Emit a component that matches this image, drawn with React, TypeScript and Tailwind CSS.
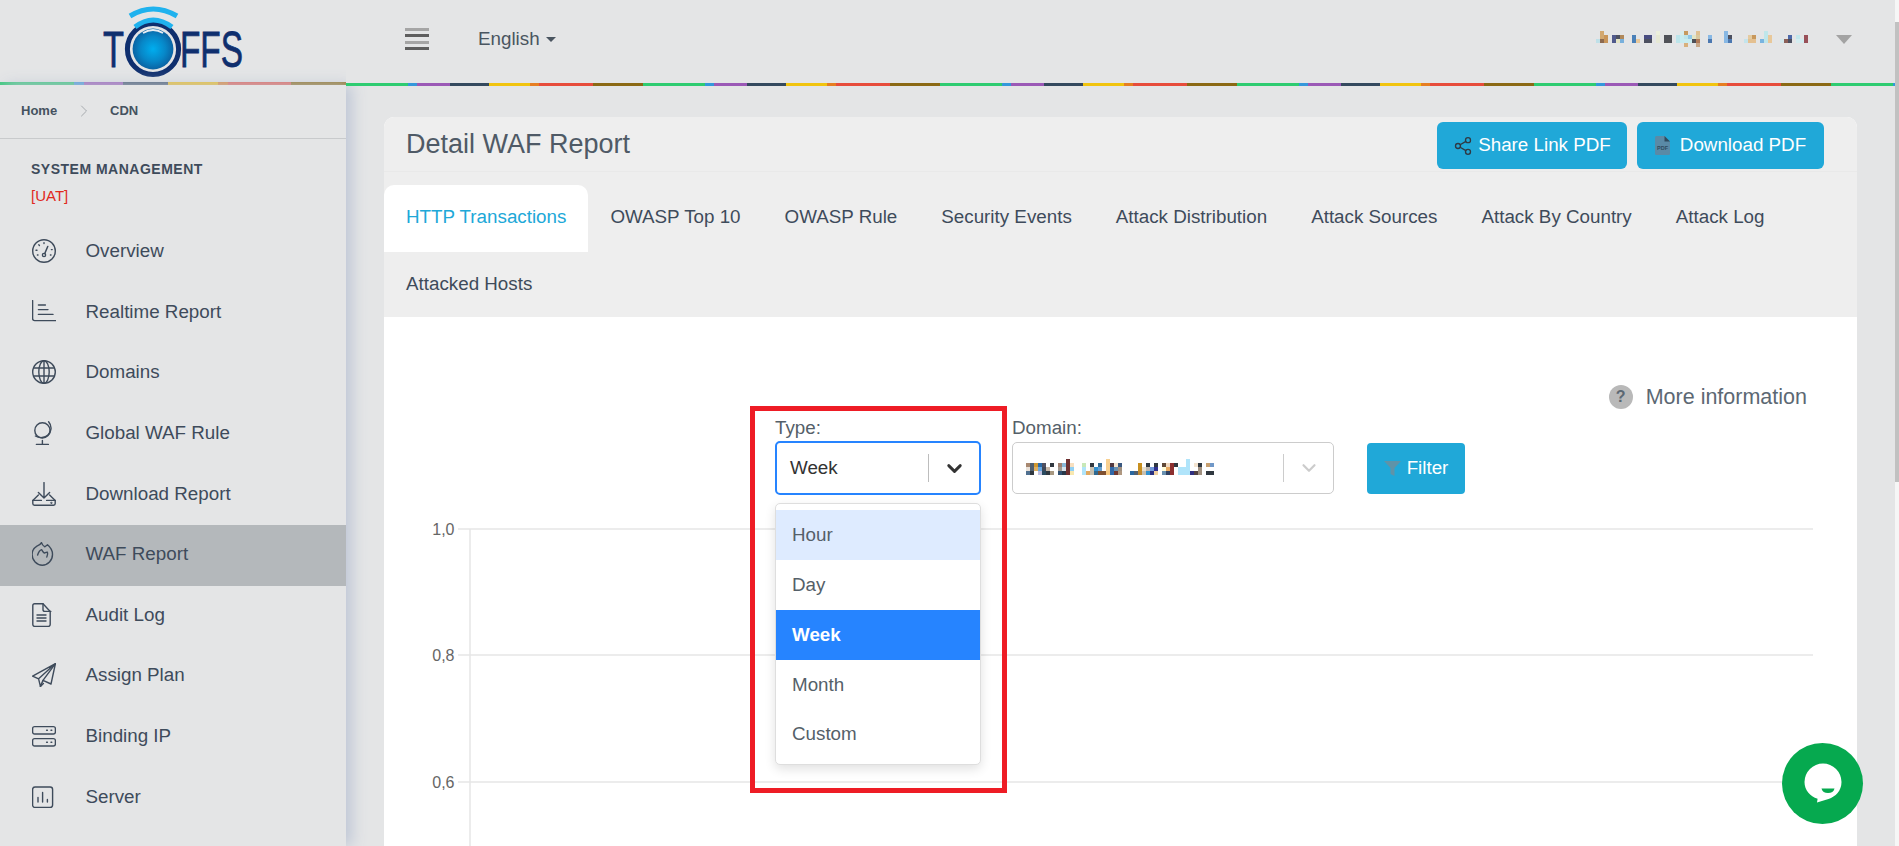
import { ChevronDown, ChevronRight, Share2 } from "lucide-react";
import type { ReactNode } from "react";

function IconBase({ children }: { children: ReactNode }) {
  return (
    <svg width="24" height="24" viewBox="0 0 24 24" fill="none" stroke="#3e4b5b" strokeWidth="1.4" strokeLinecap="round" strokeLinejoin="round">
      {children}
    </svg>
  );
}

const GaugeIcon = () => (
  <IconBase>
    <circle cx="12" cy="12" r="11.3" />
    <circle cx="12" cy="16" r="1.6" />
    <path d="M12.7 14.6 15.8 7.4" />
    <path d="M12 3.6v1M6.8 5.8l.6.6M4 11.2h1M5.4 16h.6M19.4 10.6h.8M18.4 16h.6" />
  </IconBase>
);
const ReportIcon = () => (
  <IconBase>
    <path d="M.6.6v18q0 2 2 2H23.6" />
    <path d="M6.4 5h7M6.4 9.6h9.6M6.4 14.4h14.6" />
  </IconBase>
);
const WorldIcon = () => (
  <IconBase>
    <circle cx="12" cy="12" r="11.3" />
    <ellipse cx="12" cy="12" rx="5.2" ry="11.3" />
    <path d="M12 .7v22.6M1.8 8h20.4M1.8 16h20.4" />
  </IconBase>
);
const StandGlobeIcon = () => (
  <IconBase>
    <circle cx="10.4" cy="9.4" r="7.6" />
    <path d="M16.6 .8c3.8 4.4 2.8 10-.6 13.2-3 2.8-8.4 3.6-12.6 1" />
    <path d="M10.4 19.4v3.6M4.4 23.4h12" />
  </IconBase>
);
const TrayIcon = () => (
  <IconBase>
    <path d="M12 .6v15.4M6.4 10.4l5.6 5.6 5.6-5.6" />
    <path d="M6.4 13 .8 18.4v3.2q0 1.6 1.6 1.6h19.2q1.6 0 1.6-1.6v-3.2L17.6 13" />
    <path d="M.8 18.4h8.6M14.6 18.4h8.6" />
    <circle cx="19.4" cy="20.8" r=".4" />
  </IconBase>
);
const FlameIcon = () => (
  <IconBase>
    <path d="M9.5.6c.6 2.4 2 3.4 3.4 4.2l2.6-2c3.2 2.6 5 5.6 5 9.6a10.2 10.8 0 0 1-20.4 0c0-3.8 1.8-6.4 4.8-8.2 2-.8 3.8-2 4.6-3.6Z" />
    <path d="M5.6 13c1-3 2.6-5 4-5.4 1 1.4 1.6 3 2.8 3.4 1-.2 1.8-1.2 3-.8.6 1.4.2 3-.6 4.8" />
  </IconBase>
);
const DocIcon = () => (
  <IconBase>
    <path d="M11 .8H2.6Q.8.8.8 2.6v19q0 1.8 1.8 1.8h13.8q1.8 0 1.8-1.8V8.4Z" />
    <path d="M11 .8v5.6q0 2 2 2h5.8" />
    <path d="M5 12h9M5 15h9M5 18h9" />
  </IconBase>
);
const PlaneIcon = () => (
  <IconBase>
    <path d="M23.4.6.6 13.2l6 2.6L23.4.6 19 21 11 17.4 8.4 23.4l-1.8-7.6" />
    <path d="M11 17.4 23.4.6M8.4 23.4l3-3" />
  </IconBase>
);
const RackIcon = () => (
  <IconBase>
    <rect x=".6" y="2.6" width="22.8" height="7.4" rx="2" />
    <rect x=".6" y="14.6" width="22.8" height="7.4" rx="2" />
    <path d="M14.6 6.3h.8M19 6.3h.8M14.6 18.3h.8M19 18.3h.8" />
  </IconBase>
);
const BarsIcon = () => (
  <IconBase>
    <rect x=".6" y="2" width="20" height="20.4" rx="2.4" />
    <path d="M6 17v-4.6M10.6 17V7.4M15.4 17v-2.6" />
  </IconBase>
);

const navItems = [
  { label: "Overview", icon: <GaugeIcon /> },
  { label: "Realtime Report", icon: <ReportIcon /> },
  { label: "Domains", icon: <WorldIcon /> },
  { label: "Global WAF Rule", icon: <StandGlobeIcon /> },
  { label: "Download Report", icon: <TrayIcon /> },
  { label: "WAF Report", icon: <FlameIcon />, active: true },
  { label: "Audit Log", icon: <DocIcon /> },
  { label: "Assign Plan", icon: <PlaneIcon /> },
  { label: "Binding IP", icon: <RackIcon /> },
  { label: "Server", icon: <BarsIcon /> },
];

const tabs = [
  "HTTP Transactions",
  "OWASP Top 10",
  "OWASP Rule",
  "Security Events",
  "Attack Distribution",
  "Attack Sources",
  "Attack By Country",
  "Attack Log",
  "Attacked Hosts",
];

const typeOptions = ["Hour", "Day", "Week", "Month", "Custom"];

// blurred-out values in the screenshot, one [col, row, colour] per mosaic cell
type Cell = [number, number, string];

const userCells: Cell[] = [
  [1, 0, "#d2a870"], [15, 0, "#ecefdc"], [21, 0, "#d8ecec"], [22, 0, "#c69a60"], [25, 0, "#e0c090"], [32, 0, "#88b8e4"], [42, 0, "#bfe6ea"],
  [1, 1, "#d2a870"], [2, 1, "#c8955a"], [4, 1, "#505a8c"], [5, 1, "#4c5060"], [6, 1, "#b0885a"], [9, 1, "#4a80b8"], [12, 1, "#484c80"], [13, 1, "#484c80"], [15, 1, "#e6e8d4"], [17, 1, "#4e5058"], [18, 1, "#4e5058"], [20, 1, "#bce4ea"], [21, 1, "#c8ecf0"], [22, 1, "#bde5ea"], [23, 1, "#90c8e8"], [24, 1, "#e4e4c4"], [25, 1, "#d8c8a0"], [28, 1, "#88b8e4"], [32, 1, "#88b8e4"], [33, 1, "#4c5060"], [38, 1, "#e4cba0"], [39, 1, "#c8985c"], [42, 1, "#bfe6ea"], [43, 1, "#e8c89a"], [48, 1, "#4c68a8"], [50, 1, "#c4e8ec"], [52, 1, "#985058"],
  [0, 2, "#bfe0e8"], [1, 2, "#8c6a50"], [2, 2, "#c8955a"], [4, 2, "#505a8c"], [5, 2, "#e4e4c4"], [6, 2, "#78b0dc"], [9, 2, "#4a80b8"], [10, 2, "#e8c89a"], [12, 2, "#4c5060"], [13, 2, "#4c5060"], [15, 2, "#e6e8d4"], [17, 2, "#505258"], [18, 2, "#505258"], [20, 2, "#bce4ea"], [21, 2, "#c8ecf0"], [22, 2, "#c8ecf0"], [23, 2, "#c8ecf0"], [24, 2, "#4e5058"], [25, 2, "#b07a58"], [28, 2, "#4c78b0"], [32, 2, "#88b8e4"], [33, 2, "#4c78b0"], [37, 2, "#c4e4ec"], [38, 2, "#e4c090"], [39, 2, "#e4c090"], [41, 2, "#78b4e0"], [42, 2, "#bfe6ea"], [43, 2, "#e8c89a"], [46, 2, "#d4e8ec"], [47, 2, "#8c6058"], [48, 2, "#4c5060"], [50, 2, "#d4ecf0"], [51, 2, "#d4ecf0"], [52, 2, "#985058"],
  [22, 3, "#d8b07c"], [25, 3, "#c8a888"],
];

const domainCells: Cell[] = [
  [10, 0, "#6e3030"], [20, 0, "#f8d090"], [40, 0, "#b0e4fa"],
  [0, 1, "#a88870"], [1, 1, "#506070"], [2, 1, "#d09830"], [3, 1, "#2a6aa8"], [4, 1, "#505060"], [6, 1, "#303840"], [8, 1, "#a08070"], [9, 1, "#88b8d8"], [10, 1, "#6e3030"], [11, 1, "#f8e0c0"], [14, 1, "#c8e8b8"], [16, 1, "#303840"], [18, 1, "#306890"], [20, 1, "#f8d090"], [21, 1, "#503840"], [22, 1, "#f4e4d0"], [23, 1, "#3a5880"], [28, 1, "#c89020"], [30, 1, "#303840"], [32, 1, "#303840"], [34, 1, "#604838"], [35, 1, "#f0d8c0"], [36, 1, "#8c3030"], [37, 1, "#303840"], [40, 1, "#b0e4fa"], [42, 1, "#f4e4d0"], [43, 1, "#303840"], [45, 1, "#c8a070"], [46, 1, "#7098c8"],
  [0, 2, "#e8e0d8"], [1, 2, "#506070"], [2, 2, "#e0b060"], [3, 2, "#68a8e0"], [4, 2, "#404858"], [5, 2, "#c8b8a8"], [8, 2, "#a09890"], [9, 2, "#d8e4ec"], [10, 2, "#6e3030"], [11, 2, "#90d0f4"], [14, 2, "#b0e4fa"], [16, 2, "#c8c0b0"], [17, 2, "#3090d0"], [18, 2, "#68a0d0"], [20, 2, "#f8d090"], [21, 2, "#3068a8"], [22, 2, "#6890b0"], [23, 2, "#a09080"], [28, 2, "#c89020"], [29, 2, "#e8e0d0"], [30, 2, "#c0b8b0"], [31, 2, "#7098d8"], [32, 2, "#303090"], [34, 2, "#fffbd8"], [35, 2, "#e8a860"], [36, 2, "#8c3030"], [38, 2, "#b0e4fa"], [39, 2, "#b0e4fa"], [40, 2, "#b0e4fa"], [43, 2, "#a09080"],
  [0, 3, "#507090"], [1, 3, "#303840"], [3, 3, "#c0c0e0"], [4, 3, "#2a4a60"], [5, 3, "#303840"], [6, 3, "#a89880"], [8, 3, "#305070"], [9, 3, "#283848"], [10, 3, "#6e3030"], [11, 3, "#f8e8b0"], [14, 3, "#b0e4fa"], [15, 3, "#e0a860"], [16, 3, "#c8c0b0"], [17, 3, "#306890"], [18, 3, "#805030"], [19, 3, "#805030"], [20, 3, "#f8c880"], [21, 3, "#3068a8"], [22, 3, "#703830"], [23, 3, "#b09880"], [26, 3, "#2a68a0"], [27, 3, "#506070"], [28, 3, "#c08830"], [29, 3, "#c8c0b0"], [30, 3, "#3090d0"], [31, 3, "#283080"], [32, 3, "#f0d0a0"], [34, 3, "#6890b0"], [35, 3, "#304060"], [36, 3, "#8c3030"], [38, 3, "#b0e4fa"], [39, 3, "#b0e4fa"], [40, 3, "#b0e4fa"], [41, 3, "#303080"], [42, 3, "#504040"], [43, 3, "#a09080"], [45, 3, "#303840"], [46, 3, "#303840"],
];

function Mosaic({ cells, cols }: { cells: Cell[]; cols: number }) {
  return (
    <svg width={cols * 4} height="16" shapeRendering="crispEdges" className="block">
      {cells.map(([c, r, fill]) => (
        <rect key={`${c}-${r}`} x={c * 4} y={r * 4} width="4" height="4" fill={fill} />
      ))}
    </svg>
  );
}

function Logo() {
  return (
    <svg width="200" height="76" viewBox="0 0 200 76" className="block">
      <defs>
        <radialGradient id="ball" cx="50%" cy="50%" r="55%">
          <stop offset="0%" stopColor="#00aeef" />
          <stop offset="55%" stopColor="#0787c8" />
          <stop offset="100%" stopColor="#0b5a9a" />
        </radialGradient>
      </defs>
      <text x="0" y="62" fontFamily="Liberation Sans, sans-serif" fontSize="50" fill="#0f2f6e" stroke="#0f2f6e" strokeWidth=".8" textLength="21" lengthAdjust="spacingAndGlyphs">T</text>
      <text x="77" y="62" fontFamily="Liberation Sans, sans-serif" fontSize="50" fill="#0f2f6e" stroke="#0f2f6e" strokeWidth=".8" textLength="63" lengthAdjust="spacingAndGlyphs">FFS</text>
      <circle cx="50" cy="44" r="25.6" fill="#e4e5e6" stroke="#0f2f6e" strokeWidth="5" />
      <circle cx="50" cy="44" r="20.4" fill="url(#ball)" />
      <path d="M27 11Q50-3 74 11" fill="none" stroke="#1fb2ee" strokeWidth="5" />
      <path d="M32 22Q50 8 69 22" fill="none" stroke="#1fb2ee" strokeWidth="5" />
      <path d="M40 28Q50 22 60 28" fill="none" stroke="#e6edf3" strokeWidth="1.8" />
    </svg>
  );
}

function PdfIcon() {
  return (
    <svg width="15" height="19" viewBox="0 0 15 19" className="block">
      <path d="M1.5 0H9.5L15 5.5V17.5Q15 19 13.5 19H1.5Q0 19 0 17.5V1.5Q0 0 1.5 0Z" fill="#5a8aa6" />
      <path d="M9.5 0 15 5.5H9.5Z" fill="#2f4a5e" />
      <text x="7.5" y="13.5" textAnchor="middle" fontFamily="Liberation Sans, sans-serif" fontSize="5.5" fontWeight="700" fill="#2f4a5e">PDF</text>
    </svg>
  );
}

function FilterIcon() {
  return (
    <svg width="17" height="15" viewBox="0 0 17 15" className="block">
      <path d="M0 0H17L10.5 7V15L6.5 13V7Z" fill="#5f93a8" />
    </svg>
  );
}

function Chart() {
  const rows = [
    { y: 1, label: "1,0" },
    { y: 127, label: "0,8" },
    { y: 254, label: "0,6" },
  ];
  return (
    <svg width="1473" height="330" className="block overflow-visible">
      {rows.map((r) => (
        <g key={r.label}>
          <line x1="74" x2="1429" y1={r.y} y2={r.y} stroke="#e6e6e6" strokeWidth="1.5" />
          <text x="70.5" y={r.y + 6} textAnchor="end" fontFamily="Liberation Sans, sans-serif" fontSize="16" fill="#666666">
            {r.label}
          </text>
        </g>
      ))}
      <line x1="86" x2="86" y1="1" y2="330" stroke="#e6e6e6" strokeWidth="1.5" />
    </svg>
  );
}

function ChatBubble() {
  return (
    <div className="absolute left-[1782px] top-[743px] z-30 flex h-[81px] w-[81px] items-center justify-center rounded-full bg-[#06a94f]">
      <svg width="40" height="44" viewBox="0 0 40 44">
        <path d="M20 1.5a18.5 18.5 0 0 1 18.5 18.5c0 9-6 14.5-13 17L14 40.5l.6-3.8C7 34.5 1.5 28 1.5 20A18.5 18.5 0 0 1 20 1.5Z" fill="#ffffff" />
        <path d="M18.5 26.5h13c-.6 3-3 4.5-6.5 4.5s-5.8-1.5-6.5-4.5Z" fill="#06a94f" />
      </svg>
    </div>
  );
}

export default function App() {
  return (
    <div className="relative flex h-[846px] w-[1899px] overflow-hidden bg-[#e4e5e6] font-['Liberation_Sans',Arial,sans-serif] text-[18.8px] text-[#3e4b5b]">
      {/* Sidebar */}
      <aside className="flex w-[346px] shrink-0 flex-col">
        <div className="flex h-[82px] items-start pl-[103px] pt-[5px]">
          <Logo />
        </div>
        <div className="h-[3px] bg-[linear-gradient(to_right,#3fc97f_0_74px,#4f9fdc_74px_84px,#a066bb_84px_123px,#4a5d72_123px_168px,#efc32a_168px_218px,#e08a3c_218px_228px,#e5655a_228px_291px,#927322_291px_346px)]" />
        <div className="z-10 flex flex-1 flex-col bg-[#e4e5e6] shadow-[6px_0_14px_0_#bfc7d6]">
          <div className="flex h-[54px] items-center border-b border-[#c8cacc] pb-[1px] pl-[21px] text-[13px] font-bold text-[#45525f]">
            <span className="w-[53px]">Home</span>
            <ChevronRight size={20} strokeWidth={1.1} color="#a0a4a8" className="mr-[16px]" />
            <span>CDN</span>
          </div>
          <div className="pl-[31px] pt-[22px]">
            <div className="text-[14px] font-bold leading-4 tracking-[0.5px]">SYSTEM MANAGEMENT</div>
            <div className="mt-[11px] text-[15px] leading-4 text-[#e0291c]">[UAT]</div>
          </div>
          <nav className="mt-[18px]">
            {navItems.map((item) => (
              <div
                key={item.label}
                className={`flex h-[60.6px] items-center pb-[2px] pl-[32px] ${item.active ? "bg-[#b4b8bb]" : ""}`}
              >
                <span className="flex w-[53.5px] shrink-0">{item.icon}</span>
                <span>{item.label}</span>
              </div>
            ))}
          </nav>
        </div>
      </aside>

      {/* Main column */}
      <main className="flex min-w-0 flex-1 flex-col">
        <header className="relative z-20 bg-[#e4e5e6]">
          <div className="flex h-[83px] items-center pb-[5px] pl-[59px]">
            <div className="flex w-[24px] flex-col gap-[3.5px]">
              <span className="h-[3px] bg-[#a5a5a5]" />
              <span className="h-[3px] bg-[#5e5e5e]" />
              <span className="h-[3px] bg-[#a5a5a5]" />
              <span className="h-[3px] bg-[#5e5e5e]" />
            </div>
            <div className="ml-[49px] flex items-center gap-[6px] text-[#4a5560]">
              English
              <span className="h-0 w-0 border-x-[5px] border-t-[5px] border-x-transparent border-t-[#4a5560]" />
            </div>
            <div className="ml-auto mr-[43px] flex items-center">
              <Mosaic cells={userCells} cols={53} />
              <span className="ml-[28px] h-0 w-0 border-x-[8px] border-t-[9px] border-x-transparent border-t-[#a3a3a3]" />
            </div>
          </div>
          <div className="h-[3px] bg-[repeating-linear-gradient(to_right,#2ecc71_0_62px,#3498db_62px_71px,#9b59b6_71px_104px,#34495e_104px_143px,#f1c40f_143px_184px,#e67e22_184px_193px,#e74c3c_193px_247px,#8b6914_247px_297px)]" />
        </header>

        <div className="flex-1 pl-[38px] pr-[38px] pt-[31px]">
          <section className="overflow-hidden rounded-t-[10px] bg-white">
            <div className="bg-[#eeeeee]">
              <div className="flex h-[55px] items-start justify-between border-b border-[#e9e9e9] pl-[22px] pr-[33px]">
                <h1 className="mt-[9px] text-[27px] font-normal leading-9 text-[#4f5a66]">Detail WAF Report</h1>
                <div className="mt-[5px] flex gap-[10px]">
                  <button className="flex h-[47px] w-[190px] items-center justify-center gap-[5px] rounded-[6px] bg-[#20a8d8] text-white">
                    <Share2 size={20} strokeWidth={1.6} color="#2f3a45" />
                    Share Link PDF
                  </button>
                  <button className="flex h-[47px] w-[187px] items-center justify-center gap-[10px] rounded-[6px] bg-[#20a8d8] text-white">
                    <PdfIcon />
                    Download PDF
                  </button>
                </div>
              </div>
              <div className="flex flex-wrap pt-[13px]">
                {tabs.map((tab, i) => (
                  <div
                    key={tab}
                    className={`flex items-center px-[22px] ${i === 8 ? "h-[65px] pb-[1px]" : "h-[67px] pb-[3px]"} ${
                      i === 0 ? "rounded-t-[10px] bg-white text-[#20a8d8]" : ""
                    }`}
                  >
                    {tab}
                  </div>
                ))}
              </div>
            </div>

            <div className="mt-[68px] flex h-[24px] items-center justify-end gap-[13px] pr-[50px] text-[21.5px] text-[#5c6873]">
              <span className="flex h-[24px] w-[24px] items-center justify-center rounded-full bg-[#b9b9b9] text-[16px] font-bold text-[#5c6873]">?</span>
              More information
            </div>

            <div className="ml-[391px] mt-[9px] flex items-start">
              <div className="relative w-[206px]">
                <label className="block h-[23px] leading-5 text-[#555f69]">Type:</label>
                <div className="flex h-[54px] items-center rounded-[5px] border-2 border-[#2684ff] bg-white">
                  <span className="flex-1 pl-[13px] text-[#333333]">Week</span>
                  <span className="h-[28px] w-px bg-[#bdbdbd]" />
                  <span className="flex w-[50px] justify-center pl-[1px]">
                    <ChevronDown size={23} strokeWidth={3} color="#333333" />
                  </span>
                </div>

                <div className="absolute left-0 top-[85px] z-10 h-[262px] w-[206px] rounded-[5px] border border-[#dedede] bg-white pt-[6px] shadow-[0_4px_11px_rgba(0,0,0,0.12)]">
                  {typeOptions.map((opt) => (
                    <div
                      key={opt}
                      className={`flex items-center pl-[16px] ${opt === "Custom" ? "h-[48px]" : "h-[50px]"} ${
                        opt === "Hour" ? "bg-[#deebff] text-[#555f69]" : ""
                      } ${opt === "Week" ? "bg-[#2684ff] font-bold text-white" : ""} ${
                        opt !== "Hour" && opt !== "Week" ? "text-[#555f69]" : ""
                      }`}
                    >
                      {opt}
                    </div>
                  ))}
                </div>

                {/* red annotation drawn over the screenshot */}
                <div className="pointer-events-none absolute -left-[25px] -top-[12px] z-20 h-[387px] w-[257px] border-[5px] border-[#ee1c25]" />
              </div>

              <div className="ml-[31px] w-[322px]">
                <label className="block h-[23px] leading-5 text-[#555f69]">Domain:</label>
                <div className="mt-[1px] flex h-[52px] items-center rounded-[5px] border border-[#cccccc] bg-white">
                  <span className="flex-1 pl-[13px] pb-[2px]">
                    <Mosaic cells={domainCells} cols={47} />
                  </span>
                  <span className="h-[28px] w-[1.5px] bg-[#cccccc]" />
                  <span className="flex w-[49px] justify-center">
                    <ChevronDown size={22} strokeWidth={2.4} color="#cccccc" />
                  </span>
                </div>
              </div>

              <button className="ml-[33px] mt-[25px] flex h-[51px] w-[98px] items-center justify-center gap-[6px] rounded-[4px] bg-[#20a8d8] text-white">
                <FilterIcon />
                Filter
              </button>
            </div>

            <div className="mt-[33px]">
              <Chart />
            </div>
          </section>
        </div>
      </main>

      {/* Page scrollbar */}
      <div className="w-[4px] shrink-0 bg-[#f6f6f6] pt-[22px]">
        <div className="h-[460px] bg-[#c1c1c1]" />
      </div>

      <ChatBubble />
    </div>
  );
}
